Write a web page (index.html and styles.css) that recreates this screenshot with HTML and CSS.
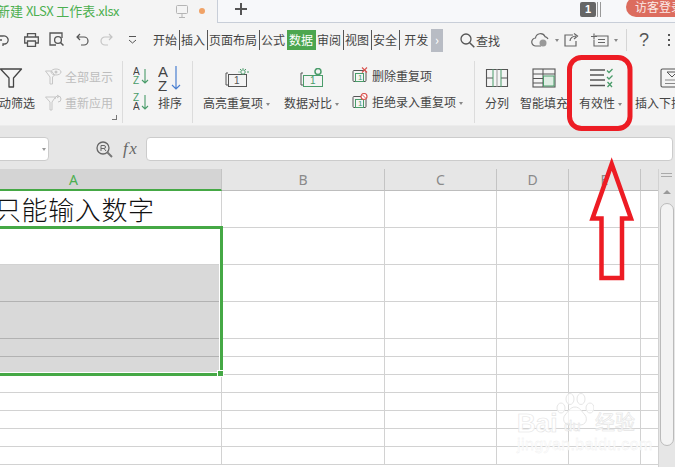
FILE: index.html
```html
<!DOCTYPE html>
<html lang="zh-CN">
<head>
<meta charset="utf-8">
<title>WPS 表格</title>
<link rel="stylesheet" href="styles.css">
</head>
<body>
<div class="page">
  <header class="titlebar">
    <div class="doc-tab">
      <span class="doc-name">新建 <span class="doc-latin">XLSX</span> 工作表<span class="doc-latin">.xlsx</span></span>
      <svg class="ic-monitor" width="12" height="13" viewBox="0 0 12 13"><rect x="0.5" y="0.5" width="11" height="8" rx="1" fill="none" stroke="#b5b5b5"/><path d="M6 9v3M3 12.5h6" stroke="#b5b5b5"/></svg>
      <span class="dot"></span>
    </div>
    <div class="tab-rest">
      <svg class="ic-plus" width="12" height="12" viewBox="0 0 12 12"><path d="M6 0v12M0 6h12" stroke="#555" stroke-width="2"/></svg>
      <span class="badge">1</span>
      <span class="badge-lines"></span>
      <span class="login">访客登录</span>
    </div>
  </header>

  <nav class="menubar">
    <div class="qa">
      <svg class="qa-first" width="14" height="14" viewBox="0 0 14 14"><path d="M1 7h3M5 3a4 4 0 1 1 2 8H5v2M1 3h4" fill="none" stroke="#555" stroke-width="1.3"/></svg>
      <svg width="15" height="14" viewBox="0 0 15 14"><path d="M3.5 4V.7h8V4M3.5 10H.7V4h13.6v6h-2.8M3.5 8h8v5.3h-8z" fill="none" stroke="#555" stroke-width="1.3"/></svg>
      <svg width="16" height="15" viewBox="0 0 16 15"><path d="M13 6V1H1v12h6" fill="none" stroke="#555" stroke-width="1.3"/><circle cx="9" cy="8" r="3.4" fill="none" stroke="#555" stroke-width="1.3"/><path d="M11.5 10.5l3 3" stroke="#555" stroke-width="1.5"/></svg>
      <svg width="13" height="13" viewBox="0 0 13 13"><path d="M4 1L1 4l3 3M1 4h7a4 4 0 0 1 0 8H5" fill="none" stroke="#555" stroke-width="1.2"/></svg>
      <svg width="13" height="13" viewBox="0 0 13 13"><path d="M9 1l3 3-3 3M12 4H5a4 4 0 0 0 0 8h3" fill="none" stroke="#c4c4c4" stroke-width="1.2"/></svg>
      <svg width="9" height="8" viewBox="0 0 9 8"><path d="M1 .5h7M1 4l3.5 3L8 4" fill="none" stroke="#555"/></svg>
    </div>
    <div class="tabs">
      <span class="tab">开始</span>
      <span class="tab">插入</span>
      <span class="tab">页面布局</span>
      <span class="tab tab-plain">公式</span>
      <span class="tab tab-active">数据</span>
      <span class="tab">审阅</span>
      <span class="tab">视图</span>
      <span class="tab">安全</span>
      <span class="tab tab-plain tab-last">开发</span>
      <span class="more">›</span>
    </div>
    <div class="search">
      <svg width="15" height="15" viewBox="0 0 15 15"><circle cx="6" cy="6" r="5" fill="none" stroke="#555" stroke-width="1.3"/><path d="M9.7 9.7l4.6 4.6" stroke="#555" stroke-width="1.5"/></svg>
      <span>查找</span>
    </div>
    <div class="actions">
      <span class="act act-cloud">
        <svg width="21" height="15" viewBox="0 0 21 15"><path d="M10 13H5a4 4 0 0 1-.5-8A5 5 0 0 1 14 3.600a4 4 0 0 1 3 2.400" fill="none" stroke="#666" stroke-width="1.2"/><circle cx="12" cy="10" r="3.500" fill="#999"/></svg>
        <i class="caret"></i>
      </span>
      <span class="act act-share">
        <svg width="15" height="14" viewBox="0 0 15 14"><path d="M9 2H1v11h11V8M6 8c0-3 3-5 6-5M10 .5L13.500 3 10 6" fill="none" stroke="#666" stroke-width="1.200"/></svg>
      </span>
      <span class="act act-box">
        <svg width="20" height="14" viewBox="0 0 20 14"><path d="M4 3h13v10H3V7M0 3.500h6M3 .5v6M7 6.500h7M7 9.500h7" fill="none" stroke="#666" stroke-width="1.100"/></svg>
        <i class="caret"></i>
      </span>
      <span class="act-sep"></span>
      <span class="help">?</span>
      <span class="kebab"></span>
    </div>
  </nav>

  <section class="ribbon">
    <div class="group group-filter">
      <div class="large large-filter">
        <svg class="big" width="24" height="20" viewBox="0 0 24 20"><path d="M1.500 1h21l-8 9v9h-4.500v-9z" fill="none" stroke="#444" stroke-width="1.300" stroke-linejoin="round"/></svg>
        <span class="label">自动筛选</span>
      </div>
      <div class="stack stack-filter">
        <div class="row muted">
          <svg width="17" height="17" viewBox="0 0 17 17"><path d="M.5 3h6l3 4-2 2v7H5v-7z" fill="none" stroke="#c6c6c6"/><ellipse cx="11" cy="4" rx="5" ry="3" fill="none" stroke="#c6c6c6"/><circle cx="11" cy="4" r="1.500" fill="#c6c6c6"/></svg>
          <span>全部显示</span>
        </div>
        <div class="row muted">
          <svg width="17" height="17" viewBox="0 0 17 17"><path d="M.5 3h10L7 8v8H5V8z" fill="none" stroke="#c6c6c6"/><path d="M10 5a3 3 0 1 1 3 3M12 1l2 1.500-2 1.500" fill="none" stroke="#c6c6c6"/></svg>
          <span>重新应用</span>
        </div>
      </div>
      <i class="launcher"></i>
    </div>

    <div class="group group-sort">
      <div class="stack stack-sort">
        <svg width="16" height="18" viewBox="0 0 16 18"><text class="az" x="0" y="8">A</text><text class="az az-green" x="0" y="17">Z</text><path d="M12 2v14M9 13l3 3 3-3" fill="none" stroke="#4a9c6a" stroke-width="1.100"/></svg>
        <svg width="16" height="18" viewBox="0 0 16 18"><text class="az az-green" x="0" y="8">Z</text><text class="az" x="0" y="17">A</text><path d="M12 2v14M9 13l3 3 3-3" fill="none" stroke="#4a9c6a" stroke-width="1.100"/></svg>
      </div>
      <div class="large large-sort">
        <svg class="big" width="24" height="26" viewBox="0 0 24 26"><text class="az-big" x="0" y="12">A</text><text class="az-big" x="0" y="26">Z</text><path d="M18 1v23M14 20l4 4 4-4" fill="none" stroke="#4a7fd0" stroke-width="1.200"/></svg>
        <span class="label">排序</span>
      </div>
    </div>

    <div class="group group-data">
      <div class="large large-hl">
        <svg class="big" width="24" height="20" viewBox="0 0 24 20"><path d="M3 5H1v12h2" fill="none" stroke="#555"/><rect x="3.500" y="6.500" width="18" height="12" fill="none" stroke="#555"/><text class="one" x="9" y="16">1</text><circle cx="18" cy="4" r="2.200" fill="none" stroke="#4a9c6a"/><path d="M18 0v.8M13.500 4h1M22 4h2M15 1l1 1M21 1l-1 1" stroke="#4a9c6a"/></svg>
        <span class="label">高亮重复项<i class="caret"></i></span>
      </div>
      <div class="large large-cmp">
        <svg class="big" width="24" height="20" viewBox="0 0 24 20"><path d="M3 5H1v12h2" fill="none" stroke="#555"/><rect x="3.500" y="7.500" width="19" height="11" fill="none" stroke="#4a9c6a"/><text class="one one-green" x="10" y="16">1</text><circle cx="18" cy="3.500" r="3" fill="none" stroke="#4a9c6a" stroke-width="1.500"/></svg>
        <span class="label">数据对比<i class="caret"></i></span>
      </div>
      <div class="stack stack-dup">
        <div class="row">
          <svg width="16" height="16" viewBox="0 0 16 16"><rect x="1" y="3.500" width="13" height="11" rx="1" fill="none" stroke="#555"/><rect x="3.500" y="6.500" width="8" height="8" fill="none" stroke="#4a9c6a"/><text class="one-small" x="6" y="13">1</text><path d="M10 .5l5 5M15 .5l-5 5" stroke="#d9534f" stroke-width="1.100"/></svg>
          <span>删除重复项</span>
        </div>
        <div class="row">
          <svg width="16" height="16" viewBox="0 0 16 16"><rect x="1" y="3.500" width="13" height="11" rx="1" fill="none" stroke="#555"/><rect x="3.500" y="6.500" width="8" height="8" fill="none" stroke="#4a9c6a"/><text class="one-small" x="6" y="13">1</text><circle cx="12" cy="3.500" r="3" fill="#fff" stroke="#d9534f" stroke-width="1.200"/><path d="M10 1.500l4 4" stroke="#d9534f"/></svg>
          <span>拒绝录入重复项<i class="caret"></i></span>
        </div>
      </div>
    </div>

    <div class="group group-tools">
      <div class="large large-split">
        <svg class="big" width="24" height="20" viewBox="0 0 24 20"><path d="M8 1.500H1.500v17H8M16 1.500h6.500v17H16M1.500 10H8M16 10h6.500M8 1.500h8M8 18.500h8" fill="none" stroke="#555" stroke-width="1.100"/><path d="M8 1v18M16 1v18" stroke="#4a9c6a"/><path d="M12 1v18" stroke="#999"/></svg>
        <span class="label">分列</span>
      </div>
      <div class="large large-fill">
        <svg class="big" width="24" height="20" viewBox="0 0 24 20"><rect x="1" y="1" width="22" height="18" fill="none" stroke="#555" stroke-width="1.100"/><path d="M1 6h22M1 10.500h10M1 15h10M11 1v18" stroke="#555"/><rect x="11.500" y="8" width="10.500" height="10" fill="#dfeee4" stroke="#4a9c6a"/></svg>
        <span class="label">智能填充</span>
      </div>
      <div class="large large-valid">
        <svg class="big" width="24" height="20" viewBox="0 0 24 20"><path d="M1 2h15M1 7h14M1 12h15M1 17.500h15" stroke="#555" stroke-width="1.300" fill="none"/><path d="M18 2.500l2 2 3.500-3.500M18 9l2 2 3.500-3.500" stroke="#4a9c6a" stroke-width="1.300" fill="none"/><path d="M18.500 14l4.500 5M23 14l-4.500 5" stroke="#4a9c6a" stroke-width="1.300"/></svg>
        <span class="label">有效性<i class="caret"></i></span>
      </div>
      <div class="large large-drop">
        <svg class="big" width="24" height="20" viewBox="0 0 24 20"><rect x="1" y="1" width="22" height="18" rx="1.500" fill="none" stroke="#555" stroke-width="1.100"/><path d="M7 4h10l-5 5z" fill="none" stroke="#555"/><path d="M5 12h14M5 15.500h14" stroke="#888"/></svg>
        <span class="label">插入下拉列表</span>
      </div>
    </div>
  </section>

  <section class="formula">
    <div class="namebox"><i class="caret caret-name"></i></div>
    <svg class="ic-zoom" width="17" height="17" viewBox="0 0 17 17"><circle cx="7" cy="7" r="6" fill="none" stroke="#666" stroke-width="1.300"/><path d="M5 10V4.500h3a1.500 1.500 0 0 1 0 3H5M8 7.500l2 2.500" fill="none" stroke="#666"/><path d="M11 11l5 5" stroke="#777" stroke-width="2"/></svg>
    <span class="fx">fx</span>
    <div class="input"></div>
  </section>

  <section class="workbook">
    <div class="sheet-wrap">
      <div class="colheads">
        <span class="ch ch-active c-a">A</span>
        <span class="ch c-b">B</span>
        <span class="ch c-c">C</span>
        <span class="ch c-d">D</span>
        <span class="ch c-e">E</span>
        <span class="ch c-f"></span>
      </div>
      <div class="sheet">
        <div class="cell a-text">只能输入数字</div><div class="cell"></div><div class="cell"></div><div class="cell"></div><div class="cell"></div><div class="cell"></div>
        <div class="cell"></div><div class="cell"></div><div class="cell"></div><div class="cell"></div><div class="cell"></div><div class="cell"></div>
        <div class="cell shade"></div><div class="cell"></div><div class="cell"></div><div class="cell"></div><div class="cell"></div><div class="cell"></div>
        <div class="cell shade"></div><div class="cell"></div><div class="cell"></div><div class="cell"></div><div class="cell"></div><div class="cell"></div>
        <div class="cell shade"></div><div class="cell"></div><div class="cell"></div><div class="cell"></div><div class="cell"></div><div class="cell"></div>
        <div class="cell shade"></div><div class="cell"></div><div class="cell"></div><div class="cell"></div><div class="cell"></div><div class="cell"></div>
        <div class="cell"></div><div class="cell"></div><div class="cell"></div><div class="cell"></div><div class="cell"></div><div class="cell"></div>
        <div class="cell"></div><div class="cell"></div><div class="cell"></div><div class="cell"></div><div class="cell"></div><div class="cell"></div>
        <div class="cell"></div><div class="cell"></div><div class="cell"></div><div class="cell"></div><div class="cell"></div><div class="cell"></div>
        <div class="cell"></div><div class="cell"></div><div class="cell"></div><div class="cell"></div><div class="cell"></div><div class="cell"></div>
        <div class="cell"></div><div class="cell"></div><div class="cell"></div><div class="cell"></div><div class="cell"></div><div class="cell"></div>
        <div class="selection"><i class="handle"></i></div>
      </div>
    </div>
    <aside class="vscroll">
      <i class="grip"></i>
      <i class="up"></i>
      <i class="thumb"></i>
    </aside>
  </section>

  <div class="watermark">
    <svg class="paw" width="38" height="36" viewBox="0 0 38 36"><g fill="rgba(255,255,255,.7)" stroke="#e6e6e6"><ellipse cx="5" cy="15" rx="4" ry="5"/><ellipse cx="14" cy="6" rx="4" ry="5.500"/><ellipse cx="25" cy="6" rx="4" ry="5.500"/><ellipse cx="34" cy="15" rx="4" ry="5"/><path d="M19 14c5 0 7 5 10 8 3 4 1 10-5 10-2 0-3-1-5-1s-3 1-5 1c-6 0-8-6-5-10 3-3 5-8 10-8z"/></g></svg>
    <span class="wm-bai">Bai</span><span class="wm-du">du</span><span class="wm-jy">经验</span>
    <span class="wm-url">jingyan.baidu.com</span>
  </div>

  <svg class="annot" width="675" height="467" viewBox="0 0 675 467">
    <rect x="569.500" y="57.500" width="60.500" height="71" rx="12" fill="none" stroke="#ed1c24" stroke-width="5"/>
    <path d="M611.700 164L592.500 218.500H601.500V278H622V218.500H631z" fill="none" stroke="#ed1c24" stroke-width="4.500" stroke-linejoin="miter"/>
  </svg>
</div>
</body>
</html>
```

FILE: styles.css
```css
* { box-sizing: border-box; }
html, body { margin: 0; padding: 0; }
body { font-family: "Noto Sans CJK SC", "Noto Sans", sans-serif; font-size: 12px; color: #444; background: #fff; }
.page { position: relative; width: 675px; height: 467px; overflow: hidden; background: #fff; display: flex; flex-direction: column; }
i { display: block; font-style: normal; }
svg { display: block; flex-shrink: 0; }

/* title bar */
.titlebar { height: 23px; display: flex; background: #f4f4f4; flex-shrink: 0; }
.doc-tab { width: 217px; flex-shrink: 0; display: flex; align-items: center; padding-bottom: 1px; }
.doc-name { margin-left: -3px; width: 179px; flex-shrink: 0; font-size: 13px; color: #4caf50; white-space: nowrap; line-height: 20px; }
.doc-latin { letter-spacing: -0.5px; }
.dot { width: 6px; height: 6px; margin-left: 11px; border-radius: 50%; background: #f0a266; flex-shrink: 0; }
.tab-rest { width: 458px; flex-shrink: 0; display: flex; align-items: flex-start; background: #f7f8fa; border-left: 1px solid #c8ced8; border-bottom: 1px solid #c8ced8; }
.ic-plus { margin: 3px 0 0 17px; }
.badge { margin: 2px 0 0 333px; width: 16px; height: 15px; flex-shrink: 0; background: #666; color: #fff; border-radius: 2px; font: bold 11px/15px "Liberation Sans", sans-serif; text-align: center; }
.badge-lines { width: 4px; height: 15px; margin: 2px 0 0 1px; flex-shrink: 0; border-left: 1px solid #999; border-right: 1px solid #999; }
.login { margin: -3px 0 0 25px; padding: 0 0 0 9px; height: 20px; width: 70px; flex-shrink: 0; border-radius: 10px; background: #dc6c5e; color: #fbe9e6; line-height: 20px; white-space: nowrap; }

/* menu bar */
.menubar { height: 34px; display: flex; align-items: center; background: #f4f4f4; flex-shrink: 0; }
.qa { display: flex; align-items: center; width: 151px; flex-shrink: 0; padding-bottom: 1px; }
.qa-first { margin-left: -2px; margin-right: 12px; }
.qa svg:nth-child(3) { margin-left: 10px; }
.qa svg:nth-child(4) { margin-left: 11px; }
.qa svg:nth-child(5) { margin-left: 11px; }
.qa svg:nth-child(6) { margin-left: 15px; }
.tabs { display: flex; align-items: center; width: 292px; flex-shrink: 0; padding-left: 1px; }
.tab { padding: 0 2px 0 1px; border-right: 1px solid #555; line-height: 20px; white-space: nowrap; }
.tab-plain { border-right-color: transparent; }
.tab-active { margin-left: -1px; padding: 0 2px; border-right-color: transparent; background: #4ca64f; color: #fff; }
.tab-last { margin-left: 3px; }
.more { width: 13px; height: 23px; background: #b8bcc4; color: #fff; text-align: center; line-height: 21px; font-size: 13px; }
.search { display: flex; align-items: center; gap: 1px; margin-left: 17px; width: 71px; flex-shrink: 0; }
.actions { display: flex; align-items: center; }
.act { display: flex; align-items: center; }
.act .caret { margin-left: 3px; }
.act-share { margin-left: 5px; }
.act-box { margin-left: 12px; }
.act-sep { width: 1px; height: 22px; margin-left: 8px; background: #d5d5d5; }
.help { margin-left: 12px; font: 18px/20px "Liberation Sans", sans-serif; color: #555; }
.kebab { width: 2px; height: 2px; margin-left: 19px; background: #555; box-shadow: 0 -5px #555, 0 5px #555; }

.caret { display: inline-block; width: 0; height: 0; margin-left: 3px; vertical-align: 2px; border-left: 2.5px solid transparent; border-right: 2.5px solid transparent; border-top: 3px solid #888; }

/* ribbon */
.ribbon { height: 68px; padding-top: 4px; display: flex; background: #f4f4f4; flex-shrink: 0; }
.group { position: relative; display: flex; height: 62px; flex-shrink: 0; border-right: 1px solid #dcdcdc; white-space: nowrap; }
.group-filter { width: 123px; }
.group-sort { width: 70px; }
.group-data { width: 282px; padding-left: 10px; }
.group-tools { border-right: 0; padding-left: 10px; }
.large { display: flex; flex-direction: column; align-items: center; padding-top: 7px; flex-shrink: 0; }
.label { display: block; margin-top: 7px; line-height: 16px; height: 16px; }
.large-filter { width: 48px; margin-left: -13px; }
.stack { display: flex; flex-direction: column; flex-shrink: 0; }
.row { display: flex; align-items: center; gap: 3px; height: 18px; }
.muted { color: #bdbdbd; }
.stack-filter { margin-left: 10px; padding-top: 6px; gap: 8px; }
.launcher { position: absolute; right: 5px; bottom: 3px; width: 5px; height: 5px; border-right: 1px solid #777; border-bottom: 1px solid #777; }
.stack-sort { margin-left: 10px; padding-top: 6px; gap: 8px; }
.large-sort { width: 24px; margin-left: 9px; padding-top: 4px; }
.large-sort .label { margin-top: 4px; }
.az { font: 10px "Liberation Sans", sans-serif; fill: #444; }
.az-green { fill: #4a9c6a; }
.az-big { font: 15px "Liberation Sans", sans-serif; fill: #444; }
.one { font: 10px "Liberation Sans", sans-serif; fill: #555; }
.one-green { fill: #4a9c6a; }
.one-small { font: 8px "Liberation Sans", sans-serif; fill: #4a9c6a; }
.large-cmp { margin-left: 14px; }
.stack-dup { margin-left: 13px; padding-top: 5px; gap: 8px; }
.stack-dup .row { gap: 4px; }
.large-fill { margin-left: 11px; }
.large-valid { margin-left: 11px; }
.large-drop { margin-left: 13px; width: 72px; align-items: flex-start; }
.large-drop .big { margin-left: 25px; }

/* formula bar */
.formula { height: 44px; padding: 11px 0 8px; display: flex; align-items: center; background: #e6e6e6; border-top: 1px solid #ececec; flex-shrink: 0; }
.namebox { position: relative; width: 59px; height: 24px; margin-left: -10px; background: #fff; border: 1px solid #ccc; border-radius: 4px; flex-shrink: 0; }
.caret-name { position: absolute; right: 2px; top: 10px; border-top-color: #999; }
.ic-zoom { margin-left: 47px; }
.fx { margin-left: 10px; width: 23px; flex-shrink: 0; font: italic 17px "Liberation Serif", serif; letter-spacing: 1.5px; color: #666; }
.input { width: 527px; height: 24px; background: #fff; border: 1px solid #ccc; border-radius: 4px; flex-shrink: 0; }

/* sheet */
.workbook { flex: 1; display: flex; min-height: 0; }
.sheet-wrap { width: 658px; overflow: hidden; flex-shrink: 0; }
.colheads { display: grid; grid-template-columns: 296px 163px 112px 72px 72px 17px; height: 22px; margin-left: -74px; background: #e6e6e6; }
.ch { display: block; height: 22px; border-right: 1px solid #c4c4c4; border-bottom: 1px solid #bdbdbd; text-align: center; font: 14px/21px "Noto Sans", sans-serif; color: #8a8a8a; }
.ch-active { background: #d4d4d4; color: #4caf50; border-bottom: 2px solid #45a845; border-right-color: #c4c4c4; }
.c-f { border-right: 0; }
.sheet { position: relative; display: grid; grid-template-columns: 296px 163px 112px 72px 72px 17px; grid-template-rows: 37px 37px 37px 37px 18px 18px 18px 18px 18px 18px 18px; margin-left: -74px; background: #fff; }
.cell { border-right: 1px solid #d2d2d2; border-bottom: 1px solid #d2d2d2; }
.cell:nth-child(6n) { border-right: 0; }
.a-text { padding-left: 69px; font-size: 26px; font-weight: 300; line-height: 36px; color: #111; white-space: nowrap; overflow: hidden; letter-spacing: 0.6px; }
.shade { background: #d9d9d9; border-bottom-color: #b2b2b2; }
.selection { position: absolute; left: 60px; top: 35px; width: 237px; height: 150px; border: 3px solid #45a845; box-shadow: inset -1px -1px 0 #fff; }
.handle { position: absolute; right: -4px; bottom: -4px; width: 7px; height: 7px; background: #45a845; border: 1px solid #fff; }
.vscroll { position: relative; flex: 1; background: #e6e6e6; border-left: 1px solid #d2d2d2; }
.grip { position: absolute; left: 2px; top: 4px; width: 11px; height: 4px; border-top: 1px solid #aaa; border-bottom: 1px solid #aaa; }
.up { position: absolute; left: 4px; top: 21px; width: 0; height: 0; border-left: 4px solid transparent; border-right: 4px solid transparent; border-bottom: 4px solid #999; }
.thumb { position: absolute; left: 1px; top: 34px; width: 14px; height: 243px; background: #f3f3f3; border: 1px solid #bbb; border-radius: 7px; }

/* overlays */
.watermark { position: absolute; left: 515px; top: 392px; width: 125px; height: 60px; color: rgba(255,255,255,.9); }
.paw { position: absolute; left: 41px; top: 1px; }
.wm-bai, .wm-du, .wm-jy, .wm-url { position: absolute; white-space: nowrap; -webkit-text-stroke: .6px #e4e4e4; font-family: "Liberation Sans", sans-serif; }
.wm-bai { left: 2px; top: 17px; font-size: 26px; line-height: 28px; font-weight: bold; }
.wm-du { left: 49px; top: 26px; font-size: 15px; line-height: 16px; -webkit-text-stroke: .4px #dcdcdc; }
.wm-jy { left: 80px; top: 17px; font-size: 20px; line-height: 26px; font-family: "Noto Sans CJK SC", sans-serif; }
.wm-url { left: 2px; top: 44px; font-size: 16px; line-height: 18px; letter-spacing: .4px; -webkit-text-stroke: .3px #ececec; }
.annot { position: absolute; left: 0; top: 0; pointer-events: none; }
```
